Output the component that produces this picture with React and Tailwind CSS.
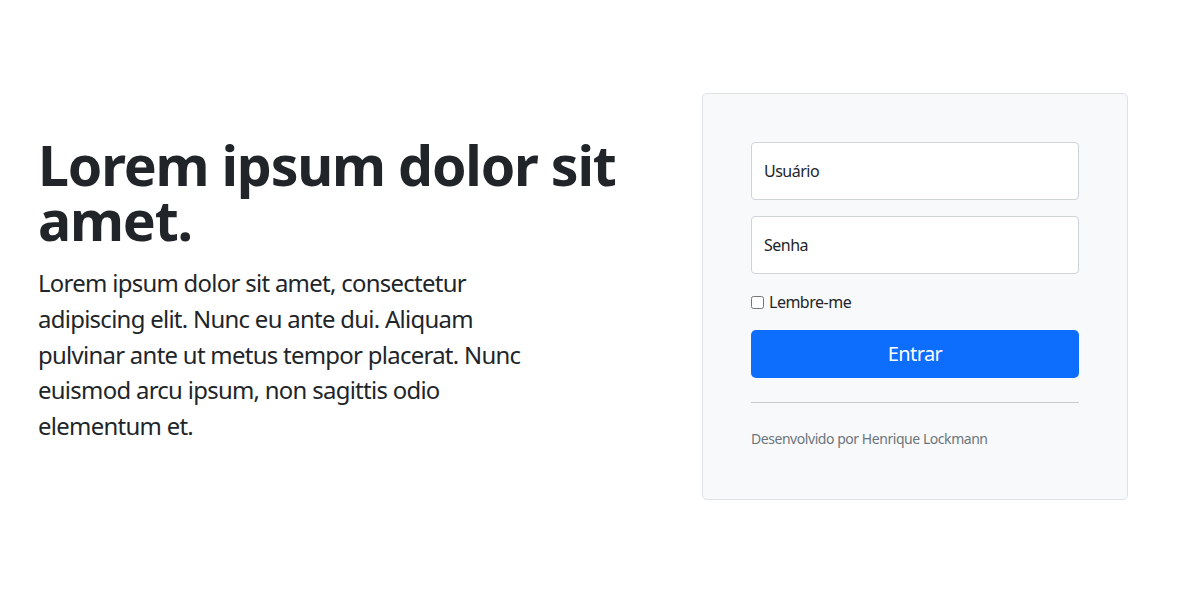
import React from "react";

const font = { fontFamily: '"Segoe UI", "Noto Sans", "Liberation Sans", sans-serif' };

const Field = ({ type, label }) => (
    <input
        type={type}
        placeholder={label}
        className="block w-full h-[58px] px-[12px] bg-white border border-[#ced4da] rounded-[4px] text-[16px] tracking-[-0.5px] text-[#212529] placeholder:text-[#212529] outline-none"
    />
);

const App = () => {
    return (
        <div className="min-h-[611px] bg-white text-[#212529]" style={font}>
            <div className="flex items-start pl-[38px] pt-[93px] pb-[113px]">
                {/* Hero text */}
                <div className="w-[664px] pr-[48px] mt-[44px]">
                    <h1 className="text-[55.4px] font-bold leading-none tracking-[-1.2px] mb-[17px] whitespace-nowrap">
                        Lorem ipsum dolor sit
                        <br />
                        amet.
                    </h1>
                    <p className="text-[23.9px] leading-[1.5] tracking-[-0.7px] mb-4 whitespace-nowrap">
                        Lorem ipsum dolor sit amet, consectetur
                        <br />
                        adipiscing elit. Nunc eu ante dui. Aliquam
                        <br />
                        pulvinar ante ut metus tempor placerat. Nunc
                        <br />
                        euismod arcu ipsum, non sagittis odio
                        <br />
                        elementum et.
                    </p>
                </div>

                {/* Login form */}
                <form className="w-[426px] p-12 bg-[#f8f9fa] border border-[#dee2e6] rounded-[5px]">
                    <div className="mb-4">
                        <Field type="text" label="Usuário" />
                    </div>
                    <div className="mb-4">
                        <Field type="password" label="Senha" />
                    </div>
                    <div className="mb-4">
                        <label className="flex items-center text-[16px] leading-6 tracking-[-0.5px]">
                            <input type="checkbox" className="w-[13px] h-[13px] mr-[5px]" />
                            Lembre-me
                        </label>
                    </div>
                    <button
                        type="button"
                        className="w-full h-[48px] bg-[#0d6efd] text-white text-[20px] tracking-[-0.6px] rounded-[5px]"
                    >
                        Entrar
                    </button>
                    <hr className="my-6 border-t border-[#c9cacc]" />
                    <small className="block text-[14px] leading-[24px] tracking-[-0.45px] text-[#6c757d]">
                        Desenvolvido por Henrique Lockmann
                    </small>
                </form>
            </div>
        </div>
    );
};

export default App;
